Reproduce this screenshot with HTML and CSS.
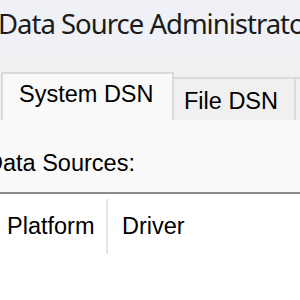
FILE: index.html
```html
<!DOCTYPE html>
<html lang="en">
<head>
    <meta charset="UTF-8">
    <title>ODBC Data Source Administrator</title>
    <link rel="stylesheet" href="styles.css">
</head>
<body>

    <div class="titlebar">
      <span class="title">Data Source Administrator (64-bit)</span>
    </div>

    <div class="window">
      <div class="tabs">
        <div class="tab active">System DSN</div>
        <div class="tab">File DSN</div>
        <div class="tab">Drivers</div>
      </div>

      <div class="panel">
        <div class="label">Data Sources:</div>

        <div class="listview">
          <div class="list-header">
            <div class="col col-platform">Platform</div>
            <div class="col col-driver">Driver</div>
          </div>
        </div>
      </div>
    </div>

</body>
</html>
```

FILE: styles.css
```css
body {
    margin: 0;
    width: 300px;
    height: 300px;
    overflow: hidden;
    background-color: #f0f0f0;
    font-family: "Liberation Sans", Arial, sans-serif;
    color: #000;
}

.titlebar {
    height: 55px;
    background-color: #eff1f7;
    white-space: nowrap;
    overflow: hidden;
}

.title {
    display: block;
    font-family: "Noto Sans", sans-serif;
    font-size: 27.5px;
    letter-spacing: -1px;
    line-height: 55px;
    margin-left: -2px;
    margin-top: -4px;
    color: #1b1b1b;
}

.window {
    padding-top: 17px;
    overflow: hidden;
}

.tabs {
    display: flex;
    align-items: flex-end;
    height: 48px;
    padding-left: 1px;
    white-space: nowrap;
}

.tab {
    flex-shrink: 0;
    box-sizing: border-box;
    height: 43px;
    padding: 9px 16px 0 10px;
    border: 2px solid #dadada;
    border-bottom: none;
    border-left: none;
    font-size: 23.5px;
    color: #000;
}

.tab.active {
    height: 48px;
    width: 173px;
    padding: 7px 0 0 16px;
    border-left: 2px solid #dadada;
    background-color: #f9f9f9;
}

.panel {
    background-color: #f9f9f9;
    height: 180px;
    overflow: hidden;
}

.label {
    font-size: 23.5px;
    margin-left: -14px;
    padding-top: 30px;
    height: 42px;
    white-space: nowrap;
}

.listview {
    border-top: 2px solid #8c8c8c;
    background-color: #fff;
    height: 120px;
}

.list-header {
    display: flex;
    padding-top: 5px;
}

.col {
    box-sizing: border-box;
    height: 55px;
    font-size: 23.5px;
    padding-top: 14px;
    white-space: nowrap;
}

.col-platform {
    width: 108px;
    padding-left: 7px;
    border-right: 2px solid #e5e5e5;
}

.col-driver {
    padding-left: 14px;
}
```
